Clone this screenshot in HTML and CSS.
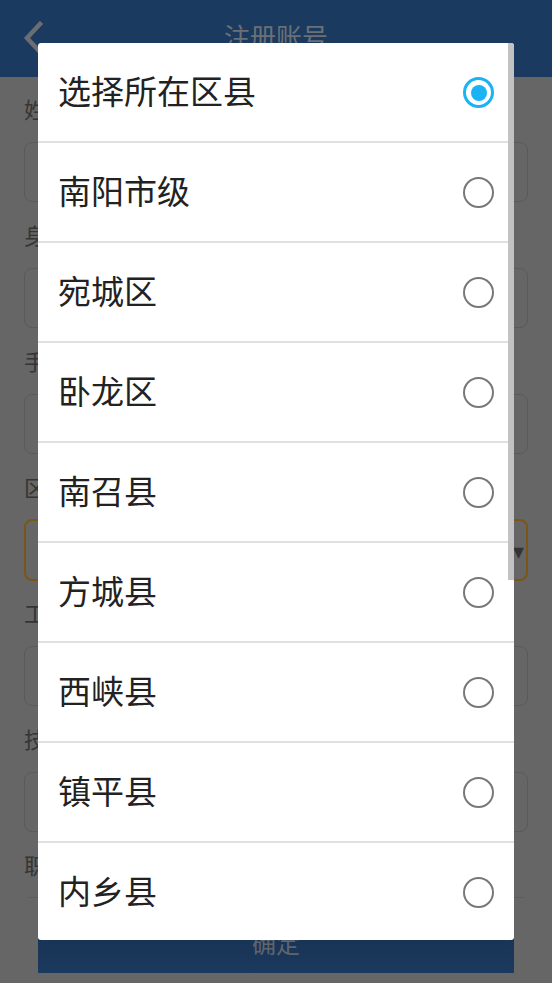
FILE: index.html
```html
<!DOCTYPE html>
<html lang="zh-CN">
<head>
<meta charset="utf-8">
<title>注册账号</title>
<link rel="stylesheet" href="styles.css">
</head>
<body>
<div class="app">
  <header class="topbar">
    <svg class="back" width="24" height="34" viewBox="0 0 24 34"><polyline points="18,3 5,17 18,31" fill="none" stroke="#6a6e73" stroke-width="4.5" stroke-linecap="square"/></svg>
    <div class="title">注册账号</div>
  </header>
  <main class="form">
    <div class="group"><div class="label">姓名</div><div class="input"></div></div>
    <div class="group"><div class="label">身份证号</div><div class="input"></div></div>
    <div class="group"><div class="label">手机号</div><div class="input"></div></div>
    <div class="group"><div class="label">区县</div><div class="input select"><span class="caret">▾</span></div></div>
    <div class="group"><div class="label">工作单位</div><div class="input"></div></div>
    <div class="group"><div class="label">技术职称</div><div class="input"></div></div>
    <div class="group last"><div class="label">职务</div><div class="line"></div></div>
    <div class="submit">确定</div>
  </main>
</div>
<div class="dialog">
  <div class="row"><span class="name">选择所在区县</span><span class="radio on"></span></div>
  <div class="row"><span class="name">南阳市级</span><span class="radio"></span></div>
  <div class="row"><span class="name">宛城区</span><span class="radio"></span></div>
  <div class="row"><span class="name">卧龙区</span><span class="radio"></span></div>
  <div class="row"><span class="name">南召县</span><span class="radio"></span></div>
  <div class="row"><span class="name">方城县</span><span class="radio"></span></div>
  <div class="row"><span class="name">西峡县</span><span class="radio"></span></div>
  <div class="row"><span class="name">镇平县</span><span class="radio"></span></div>
  <div class="row"><span class="name">内乡县</span><span class="radio"></span></div>
  <div class="scrollbar"></div>
</div>
</body>
</html>
```
FILE: styles.css
```css
* { box-sizing: border-box; }
html, body { margin: 0; padding: 0; }
body {
  width: 552px;
  height: 983px;
  overflow: hidden;
  background: #666666;
  font-family: "Noto Sans CJK SC", "Noto Sans", sans-serif;
  position: relative;
}
.app { width: 552px; }
.topbar {
  height: 77px;
  background: #1b3a5f;
  position: relative;
  display: flex;
  align-items: center;
  justify-content: center;
}
.back { position: absolute; left: 22px; top: 21px; }
.title {
  color: #6b7076;
  font-size: 26px;
  line-height: 30px;
  margin-top: -6px;
}
.form { padding: 15px 24px 0; }
.group { height: 126px; }
.group.last { height: auto; }
.label {
  height: 32px;
  line-height: 32px;
  font-size: 22px;
  color: #353535;
  font-family: "Noto Sans CJK SC", serif;
  overflow: hidden;
  white-space: nowrap;
}
.input {
  margin-top: 18px;
  height: 60px;
  border: 1.5px solid #5a5a5a;
  border-radius: 8px;
  position: relative;
}
.input.select { border: 2px solid #7a5718; height: 62px; margin-top: 17px; }
.caret {
  position: absolute;
  right: 2px;
  top: 12px;
  font-size: 22px;
  color: #333;
}
.line {
  margin: 17px 4px 0;
  height: 0;
  border-top: 1.5px solid #5c5c5c;
}
.submit {
  margin: 8px 14px 0;
  height: 67px;
  background: linear-gradient(#162d4d, #1b3a5e);
  color: #5e656e;
  font-size: 24px;
  display: flex;
  align-items: center;
  justify-content: center;
  padding-top: 6px;
}
.dialog {
  position: absolute;
  left: 38px;
  top: 43px;
  width: 476px;
  height: 897px;
  background: #ffffff;
  border-radius: 3px;
  overflow: hidden;
}
.row {
  height: 100px;
  border-bottom: 2px solid #e0e0e0;
  display: flex;
  align-items: center;
  justify-content: space-between;
  padding: 1px 20px 0 20px;
}
.name {
  font-size: 33px;
  color: #222222;
  line-height: 40px;
  margin-top: -6px;
}
.radio {
  width: 31px;
  height: 31px;
  border: 2.7px solid #787878;
  border-radius: 50%;
  position: relative;
}
.radio.on { border-color: #1ab4f5; border-width: 3px; }
.radio.on::after {
  content: "";
  position: absolute;
  left: 4.5px;
  top: 4.5px;
  width: 16px;
  height: 16px;
  border-radius: 50%;
  background: #1ab4f5;
}
.scrollbar {
  position: absolute;
  right: 0;
  top: 0;
  width: 6px;
  height: 537px;
  background: #c2c2c2;
}
```
